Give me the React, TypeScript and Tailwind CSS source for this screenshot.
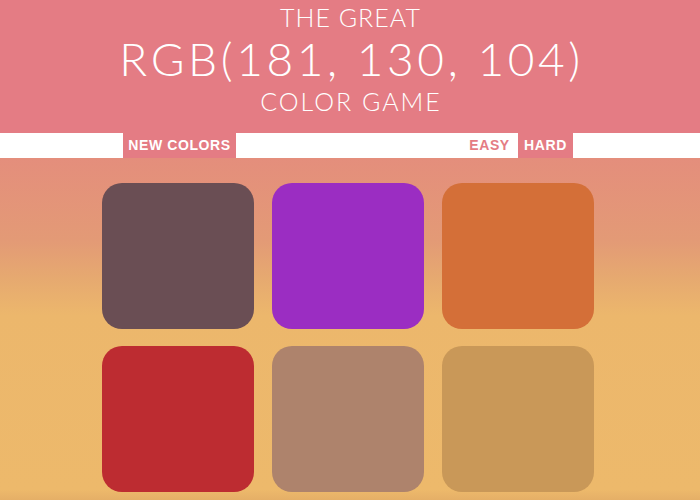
import React from 'react';

// --- DATA ---
const squares = ['#6a4e54', '#9b2dc2', '#d46f38', '#bd2c31', '#ae836c', '#c99858'];

export default function App() {
  return (
    <div className="w-[700px] h-[500px] overflow-hidden bg-[#edb96b] font-['Lato',sans-serif]">
      {/* Header */}
      <div className="h-[133px] bg-[#e47c84] text-white text-center flex flex-col items-center font-light">
        <div className="text-[25px] leading-none mt-[5px] tracking-[1px] pl-[1px]">THE GREAT</div>
        <div className="text-[46px] leading-none mt-[6px] tracking-[3.6px] pl-[3px]">RGB(181, 130, 104)</div>
        <div className="text-[25px] leading-none mt-[7px] tracking-[2px] pl-[2px]">COLOR GAME</div>
      </div>

      {/* Stripe */}
      <div className="h-[25px] bg-white">
        <div className="w-[450px] h-full ml-[123px] flex items-stretch font-['Liberation_Sans',sans-serif] font-bold text-[14px] tracking-[0.6px]">
          <button className="bg-[#e47c84] text-white w-[113px]">NEW COLORS</button>
          <div className="flex-1" />
          <button className="text-[#e47c84] w-[57px]">EASY</button>
          <button className="bg-[#e47c84] text-white w-[55px]">HARD</button>
        </div>
      </div>

      {/* Board */}
      <div className="h-[342px] bg-[linear-gradient(to_bottom,#e48e7c_0%,#e39a76_24%,#e6a970_35%,#ecb76c_46%,#edb96b_97%,#e5af67_100%)]">
        <div className="flex justify-center pr-[4px] pt-[25px]">
          <div className="grid grid-cols-[152px_152px_152px] gap-x-[18px] gap-y-[17px]">
            {squares.map((c, i) => (
              <div key={i} className="h-[146px] rounded-[20px]" style={{ backgroundColor: c }} />
            ))}
          </div>
        </div>
      </div>
    </div>
  );
}
